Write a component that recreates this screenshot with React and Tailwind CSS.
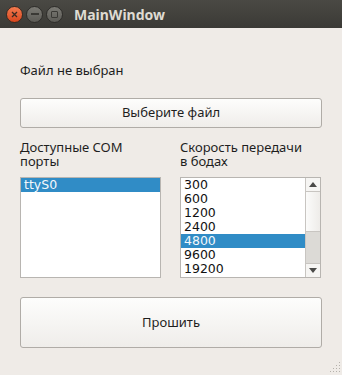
// Qt MainWindow on Ubuntu (Ambiance theme): file picker, COM port list and baud rate list.

const PORTS = ['ttyS0']
const BAUDS = ['300', '600', '1200', '2400', '4800', '9600', '19200']

function TitleButton({ kind }) {
  if (kind === 'close') {
    return (
      <div className="w-[17px] h-[17px] rounded-full bg-gradient-to-b from-[#f37a4e] to-[#d9461c] border border-[#3a2a22] flex items-center justify-center">
        <svg width="7" height="7" viewBox="0 0 7 7">
          <path d="M1 1 L6 6 M6 1 L1 6" stroke="#3b2a22" strokeWidth="1.3" />
        </svg>
      </div>
    )
  }
  return (
    <div className="w-[17px] h-[17px] rounded-full bg-gradient-to-b from-[#7b7a74] to-[#5c5b56] border border-[#2e2d2a] flex items-center justify-center">
      {kind === 'min' ? (
        <div className="w-[8px] h-[2px] bg-[#3a3935]" />
      ) : (
        <div className="w-[7px] h-[7px] border-[1.5px] border-[#3a3935] rounded-[1px]" />
      )}
    </div>
  )
}

function PushButton({ label, className }) {
  return (
    <div
      className={`w-full flex items-center justify-center rounded-[3px] border border-[#b0aca7] bg-gradient-to-b from-[#fdfdfc] to-[#efedea] text-[13px] text-[#1e1e1e] ${className}`}
    >
      {label}
    </div>
  )
}

function ListBox({ items, selected, scroll }) {
  return (
    <div className="h-[101px] w-[141px] border border-[#b8b5b1] bg-white flex font-['DejaVu_Sans',sans-serif] text-[12.5px]">
      <div className="flex-1 flex flex-col">
        {items.map((item) => (
          <div
            key={item}
            className={`h-[14px] leading-[14px] pl-[3px] ${
              item === selected ? 'bg-[#308cc6] text-[#f4f8fb]' : 'text-[#111]'
            }`}
          >
            {item}
          </div>
        ))}
      </div>
      {scroll && (
        <div className="w-[15px] border-l border-[#c8c5c1] flex flex-col bg-[#dcdad6]">
          <div className="h-[14px] border-b border-[#c8c5c1] bg-[#f6f5f3] flex items-center justify-center">
            <svg width="8" height="5" viewBox="0 0 8 5">
              <path d="M0 5 L4 0 L8 5 Z" fill="#4a4a48" />
            </svg>
          </div>
          <div className="h-[40px] bg-gradient-to-r from-[#fbfbfa] to-[#eeece9] border-b border-[#c8c5c1]" />
          <div className="flex-1" />
          <div className="h-[14px] border-t border-[#c8c5c1] bg-[#f6f5f3] flex items-center justify-center">
            <svg width="8" height="5" viewBox="0 0 8 5">
              <path d="M0 0 L4 5 L8 0 Z" fill="#4a4a48" />
            </svg>
          </div>
        </div>
      )}
    </div>
  )
}

export default function App() {
  return (
    <div className="w-[342px] h-[375px] bg-[#efebe7] flex flex-col overflow-hidden font-['Noto_Sans','DejaVu_Sans',sans-serif] text-[#1e1e1e]">
      {/* Title bar */}
      <div className="h-[28px] bg-gradient-to-b from-[#4a4944] to-[#3b3a36] flex items-center pl-[6px] shrink-0">
        <div className="flex gap-[3px]">
          <TitleButton kind="close" />
          <TitleButton kind="min" />
          <TitleButton kind="max" />
        </div>
        <span className="ml-[11px] text-[14px] font-bold text-[#dfdbd2]">MainWindow</span>
      </div>

      <div className="relative flex-1 flex flex-col px-[20px]">
        <div className="mt-[33px] h-[18px] leading-[18px] text-[13px]">Файл не выбран</div>

        <PushButton label="Выберите файл" className="mt-[19px] h-[30px]" />

        <div className="mt-[12px] flex gap-[19px]">
          <div className="flex flex-col">
            <div className="h-[37px] text-[13px] leading-[14px]">
              Доступные COM
              <br />
              порты
            </div>
            <ListBox items={PORTS} selected="ttyS0" />
          </div>
          <div className="flex flex-col">
            <div className="h-[37px] text-[13px] leading-[14px]">
              Скорость передачи
              <br />в бодах
            </div>
            <ListBox items={BAUDS} selected="4800" scroll />
          </div>
        </div>

        <PushButton label="Прошить" className="mt-[19px] h-[51px]" />

        {/* Resize grip */}
        <svg className="absolute right-[1px] bottom-[2px]" width="12" height="12" viewBox="0 0 12 12">
          {[
            [10, 2],
            [7, 5],
            [10, 5],
            [4, 8],
            [7, 8],
            [10, 8],
            [1, 11],
            [4, 11],
            [7, 11],
            [10, 11],
          ].map(([x, y]) => (
            <rect key={`${x}-${y}`} x={x} y={y - 1} width="1" height="1" fill="#b5b1ab" />
          ))}
        </svg>
      </div>
    </div>
  )
}
